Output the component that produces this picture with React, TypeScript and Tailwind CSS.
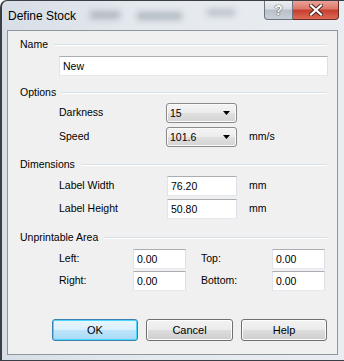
import React from "react";

const font = { fontFamily: '"Liberation Sans", Arial, sans-serif' };

function Header({ label }: { label: string }) {
  return (
    <div className="flex items-center h-[15px] pl-[12px] pr-[10px]">
      <span className="leading-none">{label}</span>
      <div className="flex-1 ml-[6px] h-[2px] border-t border-[#d5dfe5] border-b border-b-white" />
    </div>
  );
}

function TextBox({ value, className }: { value: string; className: string }) {
  return (
    <div
      className={`h-[20px] bg-white border border-[#abadb3] border-l-[#e2e3ea] border-r-[#dbdfe6] border-b-[#e3e9ef] flex items-center pl-[3px] leading-none ${className}`}
    >
      {value}
    </div>
  );
}

function Combo({ value }: { value: string }) {
  return (
    <div className="w-[71px] h-[20px] rounded-[3px] border border-[#8a8a8a] shadow-[inset_0_0_0_1px_#fafafa] bg-[linear-gradient(#f4f4f4_0%,#ececec_50%,#e0e0e0_50%,#d4d4d4_100%)] flex items-center justify-between pl-[3px] pr-[6px] leading-none">
      <span>{value}</span>
      <svg width="7" height="4" viewBox="0 0 7 4">
        <path d="M0 0 H7 L3.5 4 Z" fill="#000" />
      </svg>
    </div>
  );
}

function Btn({ label, def, className }: { label: string; def?: boolean; className: string }) {
  return (
    <div
      className={`h-[22px] rounded-[3px] border flex items-center justify-center leading-none text-[11px] ${
        def
          ? "border-[#3c7fb1] shadow-[inset_0_0_0_1px_#48d7fb] bg-[linear-gradient(#eaf6fd_0%,#d9f0fc_50%,#bee6fd_50%,#a7d9f5_100%)]"
          : "border-[#707070] shadow-[inset_0_0_0_1px_#fcfcfc] bg-[linear-gradient(#f2f2f2_0%,#ebebeb_50%,#dddddd_50%,#cfcfcf_100%)]"
      } ${className}`}
    >
      {label}
    </div>
  );
}

export default function App() {
  return (
    <div
      className="w-[344px] h-[361px] relative overflow-hidden bg-[linear-gradient(90deg,#d7dee6_0%,#e4e9ee_40%,#e9edf1_100%)] border-l-2 border-t border-b border-[#3a3f45] rounded-tl-[7px] text-[10.5px] text-black"
      style={font}
    >
      {/* blurred background behind glass */}
      <div className="absolute left-[88px] top-[10px] w-[30px] h-[8px] bg-[#8f98a3] blur-[3px] opacity-60" />
      <div className="absolute left-[135px] top-[11px] w-[45px] h-[8px] bg-[#8f98a3] blur-[3px] opacity-60" />
      <div className="absolute left-[205px] top-[8px] w-[28px] h-[7px] bg-[#8f98a3] blur-[3px] opacity-50" />

      {/* title bar */}
      <div className="relative h-[29px] flex items-start justify-between">
        <div className="pl-[6px] pt-[9px] leading-none text-[12px]">Define Stock</div>
        <div className="flex mr-[5px] -mt-[1px]">
          <div className="w-[29px] h-[20px] rounded-bl-[4px] border border-[#6b7480] border-t-0 bg-[linear-gradient(#eef1f4_0%,#d9dee4_45%,#b9c0c8_55%,#c9d0d7_100%)] flex items-center justify-center">
            <span className="text-[14px] font-bold text-white leading-none [text-shadow:0_0_1px_#333,0_0_1px_#333]">?</span>
          </div>
          <div className="w-[46px] h-[20px] rounded-br-[4px] border border-[#6b2a25] border-t-0 border-l-0 bg-[linear-gradient(#eba79d_0%,#dc7a6c_45%,#c7402f_55%,#dd6a55_100%)] flex items-center justify-center">
            <svg width="14" height="12" viewBox="0 0 14 12">
              <path d="M2 1.5 L12 10.5 M12 1.5 L2 10.5" stroke="#4a2320" strokeWidth="4" strokeLinecap="square" />
              <path d="M2 1.5 L12 10.5 M12 1.5 L2 10.5" stroke="#fff" strokeWidth="2.2" strokeLinecap="square" />
            </svg>
          </div>
        </div>
      </div>

      {/* client area */}
      <div className="ml-[5px] mr-[6px] h-[325px] border border-[#8e969e] bg-[#f0f0f0] flex flex-col">
        <div className="mt-[6px]">
          <Header label="Name" />
        </div>
        <TextBox
          value="New"
          className="mt-[4px] ml-[51px] w-[269px] border-[#5b8ab8] border-l-[#b5cfe7] border-r-[#b5cfe7] border-b-[#b5cfe7]"
        />

        <div className="mt-[9px]">
          <Header label="Options" />
        </div>
        <div className="mt-[3px] flex items-center h-[20px] pl-[51px]">
          <span className="w-[107px]">Darkness</span>
          <Combo value="15" />
        </div>
        <div className="mt-[4px] flex items-center h-[20px] pl-[51px]">
          <span className="w-[107px]">Speed</span>
          <Combo value="101.6" />
          <span className="ml-[12px]">mm/s</span>
        </div>

        <div className="mt-[10px]">
          <Header label="Dimensions" />
        </div>
        <div className="mt-[4px] flex items-center h-[20px] pl-[51px]">
          <span className="w-[108px]">Label Width</span>
          <TextBox value="76.20" className="w-[70px]" />
          <span className="ml-[12px]">mm</span>
        </div>
        <div className="mt-[3px] flex items-center h-[20px] pl-[51px]">
          <span className="w-[108px]">Label Height</span>
          <TextBox value="50.80" className="w-[70px]" />
          <span className="ml-[12px]">mm</span>
        </div>

        <div className="mt-[11px]">
          <Header label="Unprintable Area" />
        </div>
        <div className="mt-[4px] flex items-center h-[20px] pl-[51px]">
          <span className="w-[74px]">Left:</span>
          <TextBox value="0.00" className="w-[53px]" />
          <span className="ml-[15px] w-[71px]">Top:</span>
          <TextBox value="0.00" className="w-[53px]" />
        </div>
        <div className="mt-[2px] flex items-center h-[20px] pl-[51px]">
          <span className="w-[74px]">Right:</span>
          <TextBox value="0.00" className="w-[53px]" />
          <span className="ml-[15px] w-[71px]">Bottom:</span>
          <TextBox value="0.00" className="w-[53px]" />
        </div>

        <div className="mt-[28px] flex pl-[44px] gap-[8px]">
          <Btn label="OK" def className="w-[86px]" />
          <Btn label="Cancel" className="w-[87px]" />
          <Btn label="Help" className="w-[86px]" />
        </div>
      </div>
    </div>
  );
}
